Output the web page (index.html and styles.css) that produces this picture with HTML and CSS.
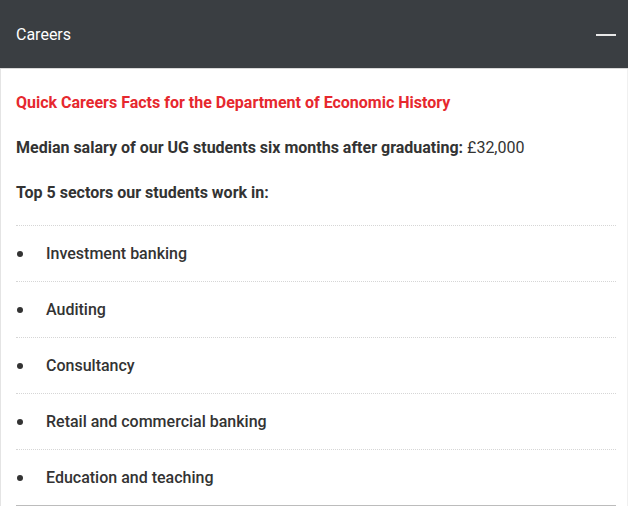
FILE: index.html
```html
<!DOCTYPE html>
<html lang="en">
<head>
    <meta charset="UTF-8">
    <meta name="viewport" content="width=device-width, initial-scale=1.0">
    <title>Careers</title>
    <link rel="stylesheet" href="styles.css">
</head>
<body>
    <div class="accordion">
        <!-- Header -->
        <div class="accordion-header">
            <span class="accordion-title">Careers</span>
            <span class="accordion-toggle"></span>
        </div>

        <!-- Panel -->
        <div class="accordion-body">
            <p class="facts-title">Quick Careers Facts for the Department of Economic History</p>
            <p><strong>Median salary of our UG students six months after graduating:</strong> £32,000</p>
            <p><strong>Top 5 sectors our students work in:</strong></p>
            <ul class="sector-list">
                <li>Investment banking</li>
                <li>Auditing</li>
                <li>Consultancy</li>
                <li>Retail and commercial banking</li>
                <li>Education and teaching</li>
            </ul>
        </div>
    </div>
</body>
</html>
```

FILE: styles.css
```css
* {
    margin: 0;
    padding: 0;
    box-sizing: border-box;
}

body {
    font-family: 'Roboto', 'Liberation Sans', sans-serif;
    background: #fff;
    color: #333;
}

.accordion {
    width: 628px;
    height: 507px;
    overflow: hidden;
}

.accordion-header {
    height: 69px;
    background: #3a3e42;
    border-bottom: 1px solid #d8d8d8;
    display: flex;
    align-items: center;
    justify-content: space-between;
    padding: 1px 12px 0 16px;
}

.accordion-title {
    color: #fff;
    font-size: 16px;
}

.accordion-toggle {
    width: 20px;
    height: 2px;
    background: #e8e8e8;
}

.accordion-body {
    border-left: 1px solid #e4e4e4;
    border-right: 1px solid #f0f0f0;
    padding: 21px 11px 0 15px;
    font-size: 16px;
    line-height: 25px;
}

.accordion-body p {
    margin-bottom: 20px;
}

.facts-title {
    color: #e6282e;
    font-weight: 700;
}

.accordion-body strong {
    font-weight: 700;
}

.sector-list {
    list-style: none;
    border-bottom: 1px solid #bcbcbc;
}

.sector-list li {
    display: flex;
    align-items: center;
    gap: 23px;
    padding: 15px 0;
    border-top: 1px dotted #d6d6d6;
    font-weight: 500;
}

.sector-list li::before {
    content: "";
    width: 6px;
    height: 6px;
    margin-left: 1px;
    border-radius: 50%;
    background: #333;
}
```
